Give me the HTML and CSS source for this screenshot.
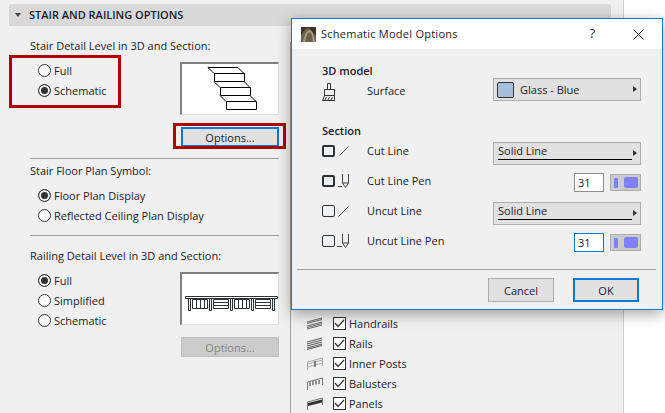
FILE: index.html
```html
<!DOCTYPE html>
<html lang="en">
<head>
    <meta charset="UTF-8">
    <title>Stair and Railing Options</title>
    <link rel="stylesheet" href="styles.css">
</head>
<body>
    <div class="panel">
        <div class="panel-header"><span class="caret"></span>STAIR AND RAILING OPTIONS</div>
        <div class="panel-body">
            <div class="settings">
                <div class="group-label">Stair Detail Level in 3D and Section:</div>
                <div class="detail-row">
                    <div class="radios marked-group">
                        <span class="red-box"></span>
                        <div class="radio"><span class="dot"></span>Full</div>
                        <div class="radio on"><span class="dot"></span>Schematic</div>
                    </div>
                    <div class="preview">
                        <svg width="96" height="50" viewBox="1 0 96 50" fill="none" stroke="#000" stroke-width="1">
                            <path d="M27 3.5H57L63 9.5H33Z"/>
                            <path d="M33.5 9.5H63.5V17.5H33.5Z"/>
                            <path d="M33 17.5L39 23.5M63 17.5L69 23.5"/>
                            <path d="M39.5 23.5H69.5V31.5H39.5Z"/>
                            <path d="M39 31.5L45 37.5M69 31.5L75 37.5"/>
                            <path d="M45.5 37.5H75.5V45.5H45.5Z"/>
                        </svg>
                    </div>
                </div>
                <div class="button-row marked-button">
                    <span class="red-box"></span>
                    <button class="btn focused">Options...</button>
                </div>
                <hr class="rule first-rule">
                <div class="group-label tight">Stair Floor Plan Symbol:</div>
                <div class="radios plain">
                    <div class="radio on"><span class="dot"></span>Floor Plan Display</div>
                    <div class="radio"><span class="dot"></span>Reflected Ceiling Plan Display</div>
                </div>
                <hr class="rule second-rule">
                <div class="group-label">Railing Detail Level in 3D and Section:</div>
                <div class="detail-row railing-row">
                    <div class="radios">
                        <div class="radio on"><span class="dot"></span>Full</div>
                        <div class="radio"><span class="dot"></span>Simplified</div>
                        <div class="radio"><span class="dot"></span>Schematic</div>
                    </div>
                    <div class="preview">
                        <svg width="96" height="50" viewBox="0 0 96 50" fill="none" stroke="#2b3338" stroke-width="1">
                            <path d="M3.5 22.5H95.5V24.5H3.5Z"/>
                            <path d="M6.5 25V36.5H8.5V25M27.5 25V36.5H29.5V25M48.5 25V36.5H50.5V25M69.5 25V36.5H71.5V25M90.5 25V36.5H92.5V25"/>
                            <path d="M10.5 25.5H25.5V34.5H10.5ZM14.5 26V34M18.5 26V34M22.5 26V34"/>
                            <path d="M31.5 25.5H46.5V34.5H31.5ZM32 28.5H46M32 31.5H46"/>
                            <path d="M52.5 25.5H67.5V34.5H52.5ZM56.5 26V34M60.5 26V34M64.5 26V34"/>
                            <path d="M73.5 25.5H88.5V34.5H73.5ZM74 28.5H88M74 31.5H88"/>
                        </svg>
                    </div>
                </div>
                <div class="button-row railing-button">
                    <button class="btn disabled">Options...</button>
                </div>
            </div>
            <div class="parts">
                <div class="part">
                    <svg class="part-icon" width="16" height="13" viewBox="0 0 16 13" fill="none" stroke="#666"><path d="M0 5L15 1M0 6.5L15 2.5M0 9L15 5M0 10.5L15 6.5M0 12L15 8"/></svg>
                    <span class="check"><svg width="11" height="9" viewBox="0 0 11 9" fill="none" stroke="#333" stroke-width="1.2"><path d="M1 4L4 7.5L10 1"/></svg></span>Handrails
                </div>
                <div class="part">
                    <svg class="part-icon" width="16" height="13" viewBox="0 0 16 13" fill="none" stroke="#555"><path d="M0 5L15 1M0 7L15 3M0 9L15 5M0 11L15 7M0 12.5L15 8.5"/></svg>
                    <span class="check"><svg width="11" height="9" viewBox="0 0 11 9" fill="none" stroke="#333" stroke-width="1.2"><path d="M1 4L4 7.5L10 1"/></svg></span>Rails
                </div>
                <div class="part">
                    <svg class="part-icon" width="16" height="14" viewBox="0 0 16 14" fill="none" stroke="#aaa"><path d="M.5 13V5L15.5 1V9M.5 7L15.5 3M15.5 6L.5 10"/><path d="M8 4V10" stroke="#222"/></svg>
                    <span class="check"><svg width="11" height="9" viewBox="0 0 11 9" fill="none" stroke="#333" stroke-width="1.2"><path d="M1 4L4 7.5L10 1"/></svg></span>Inner Posts
                </div>
                <div class="part">
                    <svg class="part-icon" width="16" height="14" viewBox="0 0 16 14" fill="none" stroke="#777"><path d="M.5 13V5L15.5 1V8"/><path d="M3 5V9M6 4V8M9 3.5V7.5M12 3V7" stroke="#333"/></svg>
                    <span class="check"><svg width="11" height="9" viewBox="0 0 11 9" fill="none" stroke="#333" stroke-width="1.2"><path d="M1 4L4 7.5L10 1"/></svg></span>Balusters
                </div>
                <div class="part">
                    <svg class="part-icon" width="16" height="14" viewBox="0 0 16 14"><path d="M.5 13V5L15.5 1V8" fill="none" stroke="#777"/><path d="M1 6L15 2.5V5.5L1 9Z" fill="#333"/></svg>
                    <span class="check"><svg width="11" height="9" viewBox="0 0 11 9" fill="none" stroke="#333" stroke-width="1.2"><path d="M1 4L4 7.5L10 1"/></svg></span>Panels
                </div>
            </div>
        </div>
    </div>

    <div class="dialog">
        <div class="titlebar">
            <svg class="app-icon" width="15" height="15" viewBox="0 0 15 15">
                <rect width="15" height="15" fill="#6e6049"/>
                <path d="M0 15V9Q3 1 8 1L15 9V0H0Z" fill="#3b3326"/>
                <path d="M3 15Q5 4 9 4Q12 6 13 15" fill="none" stroke="#a89a80" stroke-width="2"/>
            </svg>
            <span class="title">Schematic Model Options</span>
            <span class="help">?</span>
            <svg class="close" width="11" height="11" viewBox="0 0 11 11" stroke="#222" fill="none"><path d="M.5 .5L10.5 10.5M10.5 .5L.5 10.5"/></svg>
        </div>
        <div class="dialog-body">
            <div class="heading">3D model</div>
            <div class="row surface-row">
                <svg class="brush" width="14" height="18" viewBox="0 0 14 18" fill="none" stroke="#333">
                    <path d="M5.5 6.5V.5H8.5V6.5"/>
                    <path d="M2.5 6.5H12.5V12.5H2.5Z"/>
                    <path d="M2.5 12.5L.5 17.5H12.5V12.5M3 17L4.5 14M6 17L7.5 14M9 17L10.5 14"/>
                </svg>
                <span class="row-label">Surface</span>
                <div class="dropdown surface-drop">
                    <span class="swatch"></span>Glass - Blue<span class="arrow"></span>
                </div>
            </div>
            <div class="heading section-heading">Section</div>
            <div class="row">
                <span class="box thick"></span>
                <svg class="line-icon" width="10" height="10" viewBox="0 0 10 10" stroke="#555" fill="none"><path d="M.5 9.5L9.5 .5"/></svg>
                <span class="row-label">Cut Line</span>
                <div class="dropdown line-drop">Solid Line<span class="arrow"></span></div>
            </div>
            <div class="row">
                <span class="box thick"></span>
                <svg class="pen-icon" width="12" height="14" viewBox="0 0 12 14" stroke="#444" fill="none"><path d="M0 12.5H4M4.5 0V9L7.5 13.5L10.5 9V0M4.5 9H10.5"/></svg>
                <span class="row-label">Cut Line Pen</span>
                <div class="pen-field">
                    <span class="num">31</span>
                    <span class="pen-btn"><i class="pen-thin"></i><i class="pen-fat"></i></span>
                </div>
            </div>
            <div class="row">
                <span class="box"></span>
                <svg class="line-icon wide" width="11" height="11" viewBox="0 0 11 11" stroke="#555" fill="none"><path d="M.5 10.5L10.5 .5"/></svg>
                <span class="row-label">Uncut Line</span>
                <div class="dropdown line-drop">Solid Line<span class="arrow"></span></div>
            </div>
            <div class="row">
                <span class="box"></span>
                <svg class="pen-icon" width="12" height="14" viewBox="0 0 12 14" stroke="#444" fill="none"><path d="M-1 12.5H4M4.5 0V9L7.5 13.5L10.5 9V0M4.5 9H10.5"/></svg>
                <span class="row-label">Uncut Line Pen</span>
                <div class="pen-field">
                    <span class="num active">31</span>
                    <span class="pen-btn"><i class="pen-thin"></i><i class="pen-fat"></i></span>
                </div>
            </div>
        </div>
        <div class="dialog-foot">
            <button class="btn foot-btn">Cancel</button>
            <button class="btn foot-btn ok">OK</button>
        </div>
    </div>
</body>
</html>
```

FILE: styles.css
```css
html, body {
    margin: 0;
    padding: 0;
    height: 413px;
    overflow: hidden;
    background-color: #fff;
    font-family: "Open Sans", "Noto Sans", sans-serif;
    font-size: 11px;
    color: #1b1b2b;
}

.panel {
    box-sizing: border-box;
    width: 624px;
    height: 413px;
    padding: 4px 0 0 9px;
    background-color: #f0f0f0;
    border-right: 1px solid #d0d0d0;
}

.panel-header {
    box-sizing: border-box;
    display: flex;
    align-items: center;
    width: 602px;
    height: 22px;
    padding-bottom: 1px;
    background-color: #d9d9d9;
    border-radius: 3px 3px 0 0;
    font-weight: 600;
}

.caret {
    width: 0;
    height: 0;
    margin: 1px 8px 0 6px;
    border-left: 3.5px solid transparent;
    border-right: 3.5px solid transparent;
    border-top: 4px solid #444;
}

.panel-body {
    display: flex;
}

.settings {
    width: 249px;
    padding: 0 11px 0 21px;
    height: 387px;
}

.group-label {
    height: 16px;
    line-height: 16px;
    margin-top: 12px;
}

.group-label.tight {
    margin-top: 4px;
}

.detail-row {
    display: flex;
    justify-content: space-between;
    margin-top: 7px;
    height: 54px;
}

.radios {
    width: 120px;
    padding-left: 8px;
}

.radios.plain {
    width: auto;
    margin-top: 7px;
}

.radio {
    box-sizing: border-box;
    display: flex;
    align-items: center;
    height: 20px;
    padding-bottom: 1px;
}

.dot {
    box-sizing: border-box;
    width: 13px;
    height: 13px;
    margin-right: 3px;
    border: 1px solid #333;
    border-radius: 50%;
    background-color: #fff;
}

.radio.on .dot {
    background-color: #333;
    box-shadow: inset 0 0 0 2px #f4f4f4;
}

.marked-group {
    position: relative;
    height: 40px;
}

.red-box {
    position: absolute;
    box-sizing: border-box;
    border: 3px solid #b00000;
}

.marked-group .red-box {
    left: -21px;
    top: -6px;
    width: 112px;
    height: 53px;
}

.preview {
    box-sizing: border-box;
    width: 99px;
    height: 53px;
    margin-top: 1px;
    background-color: #fff;
    border: 2px solid;
    border-color: #808080 #e0e0e0 #e0e0e0 #808080;
    border-right-width: 1px;
    border-bottom-width: 1px;
}

.preview svg {
    display: block;
}

.button-row {
    position: relative;
    display: flex;
    justify-content: flex-end;
    margin-top: 12px;
    height: 20px;
}

.marked-button .red-box {
    right: -7px;
    top: -4px;
    width: 113px;
    height: 26px;
}

.btn {
    box-sizing: border-box;
    margin: 0;
    padding: 0;
    font-family: inherit;
    font-size: 11px;
    color: #1b1b2b;
    background-color: #e1e1e1;
    border: 1px solid #adadad;
}

.button-row .btn {
    width: 98px;
    height: 20px;
}

.btn.focused {
    border: 2px solid #0a78d7;
}

.btn.disabled {
    background-color: #cbcbcb;
    border-color: #c0c0c0;
    color: #858585;
}

.rule {
    height: 1px;
    margin: 0;
    border: 0;
    background-color: #a0a0a0;
}

.first-rule {
    margin-top: 11px;
}

.second-rule {
    margin-top: 9px;
}

.railing-row {
    height: 66px;
}

.railing-button {
    margin-top: 0;
}

.parts {
    box-sizing: border-box;
    margin-top: 16px;
    height: 371px;
    padding: 272px 0 0 16px;
    border-left: 1px solid #a0a0a0;
    overflow: hidden;
}

.part {
    box-sizing: border-box;
    display: flex;
    align-items: center;
    height: 20px;
    padding-bottom: 1px;
}

.part-icon {
    width: 16px;
    margin-right: 10px;
}

.check {
    box-sizing: border-box;
    display: flex;
    align-items: center;
    justify-content: center;
    width: 13px;
    height: 13px;
    margin-right: 3px;
    border: 1px solid #333;
    background-color: #fff;
}

/* dialog floats over the panel */
.dialog {
    position: absolute;
    left: 291px;
    top: 18px;
    box-sizing: border-box;
    width: 372px;
    height: 292px;
    background-color: #f0f0f0;
    border: 1px solid #1479cf;
    box-shadow: 0 4px 14px rgba(0, 0, 0, 0.35);
}

.titlebar {
    display: flex;
    align-items: center;
    height: 30px;
    padding-left: 9px;
    background-color: #fff;
}

.app-icon {
    margin-right: 5px;
}

.title {
    flex: 1;
    padding-bottom: 2px;
    letter-spacing: 0.25px;
}

.help {
    margin-right: 38px;
    padding-bottom: 2px;
    font-size: 13px;
}

.close {
    margin-right: 18px;
}

.dialog-body {
    box-sizing: border-box;
    height: 221px;
    margin: 0 6px 0 5px;
    padding: 14px 15px 0 25px;
    border-bottom: 1px solid #a0a0a0;
}

.heading {
    height: 16px;
    line-height: 16px;
    font-weight: 600;
}

.section-heading {
    margin-top: 21px;
    margin-bottom: -3px;
}

.row {
    display: flex;
    align-items: center;
    height: 30px;
    position: relative;
}

.surface-row {
    height: 24px;
    margin-top: -1px;
}

.brush {
    margin: 3px 31px 0 0;
}

.box {
    box-sizing: border-box;
    width: 13px;
    height: 12px;
    border: 1px solid #2b3338;
    border-radius: 2px;
}

.box.thick {
    border-width: 2px;
}

.line-icon {
    margin-left: 4px;
    width: 10px;
}

.line-icon.wide {
    margin-left: 3px;
    width: 11px;
}

.pen-icon {
    margin-left: 3px;
    width: 12px;
    overflow: visible;
}

.row .line-icon + .row-label,
.row .pen-icon + .row-label {
    position: absolute;
    left: 45px;
    top: 7px;
}

.dropdown {
    position: relative;
    box-sizing: border-box;
    display: flex;
    align-items: center;
    width: 148px;
    height: 23px;
    margin: 5px 0 0 auto;
    background-color: #e1e1e1;
    border: 1px solid #adadad;
}

.surface-drop {
    align-self: flex-start;
    margin-top: 0;
}

.swatch {
    box-sizing: border-box;
    width: 17px;
    height: 16px;
    margin: 0 6px 0 3px;
    background-color: #a5bfdc;
    border: 1px solid #333;
    border-radius: 2px;
}

.arrow {
    position: absolute;
    right: 3px;
    top: 7px;
    width: 0;
    height: 0;
    border-top: 3.5px solid transparent;
    border-bottom: 3.5px solid transparent;
    border-left: 4px solid #333;
}

.line-drop {
    padding: 0 0 7px 4px;
}

.line-drop::after {
    content: "";
    position: absolute;
    left: 4px;
    right: 8px;
    bottom: 4px;
    height: 1px;
    background-color: #000;
}

.pen-field {
    display: flex;
    align-items: center;
    gap: 6px;
    margin: 3px 0 0 auto;
}

.num {
    box-sizing: border-box;
    width: 30px;
    height: 19px;
    padding-left: 3px;
    line-height: 17px;
    background-color: #fff;
    border: 1px solid #8c8c8c;
}

.num.active {
    border-color: #0a78d7;
}

.pen-btn {
    box-sizing: border-box;
    display: flex;
    align-items: center;
    gap: 6px;
    width: 31px;
    height: 17px;
    padding-left: 3px;
    background-color: #cbcbcb;
    border: 1px solid #adadad;
}

.pen-thin {
    width: 4px;
    height: 10px;
    background-color: #8080ff;
    border-radius: 1px;
}

.pen-fat {
    width: 14px;
    height: 11px;
    background-color: #8080ff;
    border-radius: 2px;
}

.dialog-foot {
    display: flex;
    justify-content: flex-end;
    gap: 19px;
    padding: 8px 23px 0 0;
}

.foot-btn {
    width: 66px;
    height: 24px;
}

.foot-btn.ok {
    border: 2px solid #0a78d7;
}
```
